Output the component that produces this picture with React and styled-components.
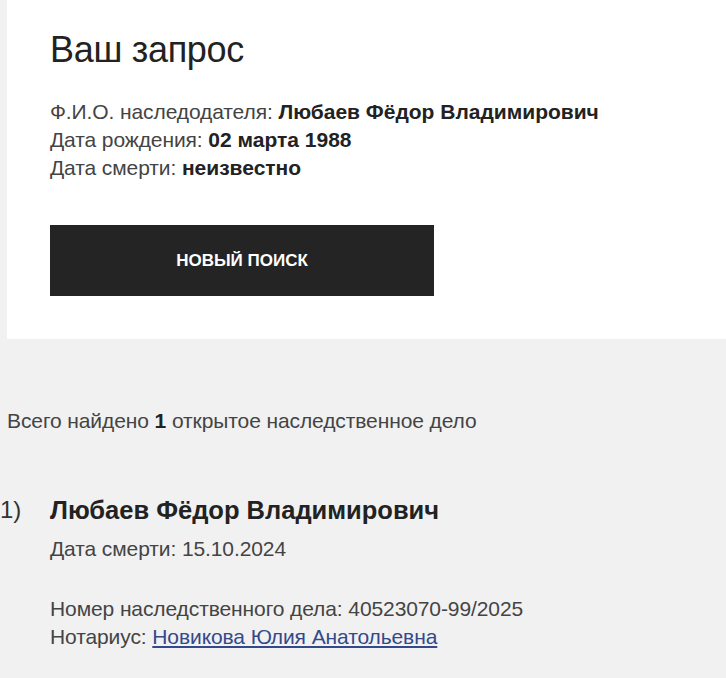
import React from "react";
import styled, { createGlobalStyle } from "styled-components";

const GlobalStyle = createGlobalStyle`
    html, body {
        margin: 0;
        padding: 0;
        background: #f1f1f1;
    }
    body {
        font-family: "Liberation Sans", Arial, sans-serif;
        color: #3a3a3a;
    }
`;

const Page = styled.div`
    width: 726px;
    min-height: 678px;
    background: #f1f1f1;
    overflow: hidden;
`;

const RequestCard = styled.section`
    margin-left: 7px;
    background: #fff;
    padding: 30px 43px 43px;
`;

const Title = styled.h1`
    margin: 0 0 28px;
    font-size: 36px;
    font-weight: 400;
    line-height: 40px;
    color: #222;
    letter-spacing: -0.3px;
`;

const InfoLine = styled.div`
    font-size: 21px;
    line-height: 28px;
    color: #444;
    letter-spacing: -0.1px;
`;

const Strong = styled.b`
    font-weight: 700;
    color: #222;
    letter-spacing: 0;
`;

const SearchButton = styled.button`
    display: flex;
    align-items: center;
    justify-content: center;
    width: 384px;
    height: 71px;
    margin-top: 43px;
    border: none;
    background: #242424;
    color: #fff;
    font-family: inherit;
    font-size: 17px;
    font-weight: 700;
    text-transform: uppercase;
    cursor: pointer;
`;

const Results = styled.section`
    padding: 68px 0 0;
`;

const Summary = styled.p`
    margin: 0 0 0 7px;
    font-size: 21px;
    line-height: 28px;
    color: #444;
    letter-spacing: -0.1px;
`;

const CaseItem = styled.div`
    display: flex;
    margin-top: 60px;
`;

const Marker = styled.div`
    width: 50px;
    flex-shrink: 0;
    font-size: 24px;
    line-height: 30px;
    color: #333;
`;

const CaseBody = styled.div`
    display: flex;
    flex-direction: column;
`;

const CaseName = styled.div`
    font-size: 25.5px;
    line-height: 30px;
    font-weight: 700;
    color: #222;
`;

const CaseLine = styled.div`
    font-size: 21px;
    line-height: 28px;
    color: #444;
    letter-spacing: -0.1px;
    margin-top: ${(p) => p.$gap || 0}px;
`;

const NotaryLink = styled.a`
    color: #34498a;
    text-decoration: underline;
`;

function App() {
    return (
        <Page>
            <GlobalStyle />
            <RequestCard>
                <Title>Ваш запрос</Title>
                <InfoLine>
                    Ф.И.О. наследодателя: <Strong>Любаев Фёдор Владимирович</Strong>
                </InfoLine>
                <InfoLine>
                    Дата рождения: <Strong>02 марта 1988</Strong>
                </InfoLine>
                <InfoLine>
                    Дата смерти: <Strong>неизвестно</Strong>
                </InfoLine>
                <SearchButton>Новый поиск</SearchButton>
            </RequestCard>
            <Results>
                <Summary>
                    Всего найдено <Strong>1</Strong> открытое наследственное дело
                </Summary>
                <CaseItem>
                    <Marker>1)</Marker>
                    <CaseBody>
                        <CaseName>Любаев Фёдор Владимирович</CaseName>
                        <CaseLine $gap={10}>Дата смерти: 15.10.2024</CaseLine>
                        <CaseLine $gap={32}>
                            Номер наследственного дела: 40523070-99/2025
                        </CaseLine>
                        <CaseLine>
                            Нотариус: <NotaryLink href="#">Новикова Юлия Анатольевна</NotaryLink>
                        </CaseLine>
                    </CaseBody>
                </CaseItem>
            </Results>
        </Page>
    );
}

export default App;
